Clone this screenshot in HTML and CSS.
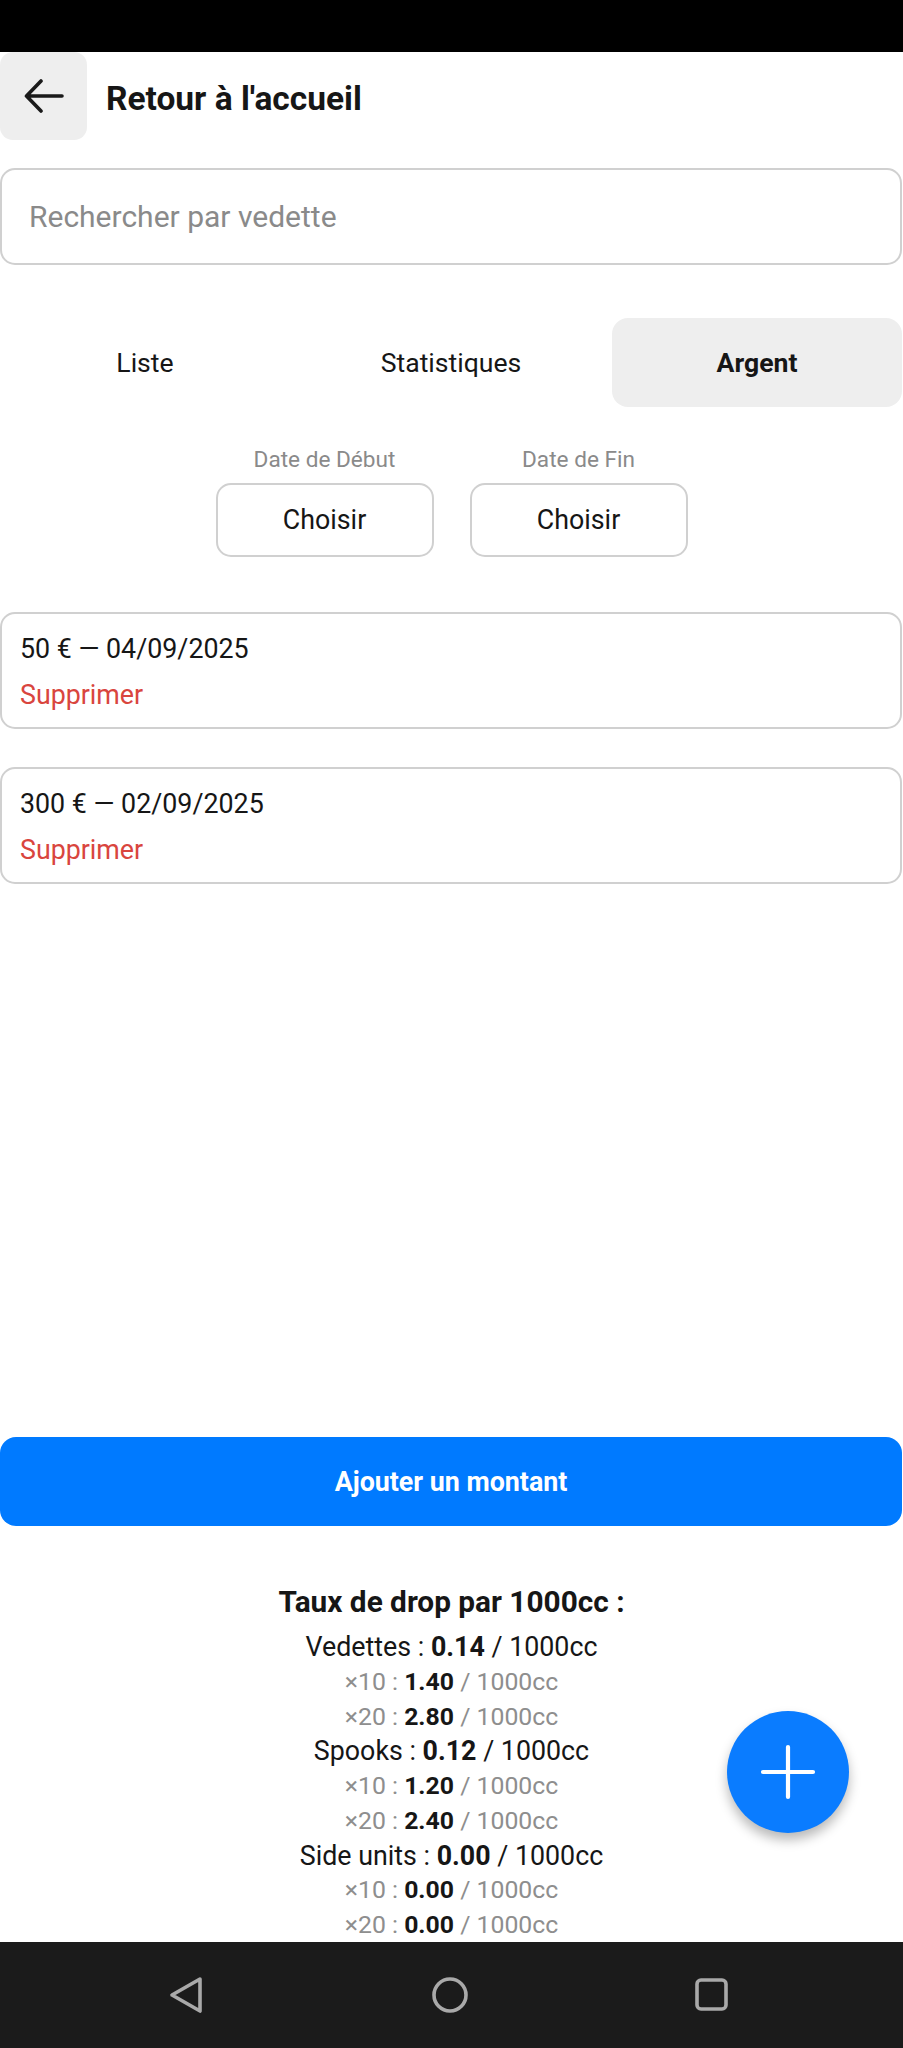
FILE: index.html
```html
<!DOCTYPE html>
<html lang="fr">
<head>
<meta charset="utf-8">
<title>Argent</title>
<link rel="stylesheet" href="styles.css">
</head>
<body>
<div class="statusbar"></div>
<main class="screen">
  <header class="topbar">
    <button class="back" aria-label="Retour">
      <svg width="40" height="36" viewBox="0 0 40 36"><path d="M38 18H3M17 3L2.5 18L17 33" fill="none" stroke="#1a1a1a" stroke-width="3.6" stroke-linecap="round" stroke-linejoin="round"/></svg>
    </button>
    <h1 class="title">Retour à l'accueil</h1>
  </header>

  <div class="search"><input class="search-input" type="text" placeholder="Rechercher par vedette"></div>

  <nav class="tabs">
    <div class="tab">Liste</div>
    <div class="tab">Statistiques</div>
    <div class="tab active">Argent</div>
  </nav>

  <section class="dates">
    <div class="date-field">
      <div class="date-label">Date de Début</div>
      <button class="date-btn">Choisir</button>
    </div>
    <div class="date-field">
      <div class="date-label">Date de Fin</div>
      <button class="date-btn">Choisir</button>
    </div>
  </section>

  <section class="entries">
    <div class="entry">
      <div class="entry-text">50 € — 04/09/2025</div>
      <div class="entry-delete">Supprimer</div>
    </div>
    <div class="entry">
      <div class="entry-text">300 € — 02/09/2025</div>
      <div class="entry-delete">Supprimer</div>
    </div>
  </section>

  <button class="add-btn">Ajouter un montant</button>

  <section class="stats">
    <h2 class="stats-title">Taux de drop par 1000cc :</h2>
    <div class="line main">Vedettes : <b>0.14</b> / 1000cc</div>
    <div class="line sub">×10 : <b>1.40</b> / 1000cc</div>
    <div class="line sub">×20 : <b>2.80</b> / 1000cc</div>
    <div class="line main">Spooks : <b>0.12</b> / 1000cc</div>
    <div class="line sub">×10 : <b>1.20</b> / 1000cc</div>
    <div class="line sub">×20 : <b>2.40</b> / 1000cc</div>
    <div class="line main">Side units : <b>0.00</b> / 1000cc</div>
    <div class="line sub">×10 : <b>0.00</b> / 1000cc</div>
    <div class="line sub">×20 : <b>0.00</b> / 1000cc</div>
  </section>
</main>

<button class="fab" aria-label="Ajouter">
  <svg width="56" height="56" viewBox="0 0 56 56"><path d="M28 3V53M3 28H53" stroke="#fff" stroke-width="4.2" stroke-linecap="round"/></svg>
</button>

<div class="navbar">
  <svg class="nav-icon" width="40" height="40" viewBox="0 0 40 40"><path d="M33 4L5 20L33 36Z" fill="none" stroke="#a9a9a9" stroke-width="3.6" stroke-linejoin="round"/></svg>
  <svg class="nav-icon" width="40" height="40" viewBox="0 0 40 40"><circle cx="20" cy="20" r="16" fill="none" stroke="#a9a9a9" stroke-width="3.6"/></svg>
  <svg class="nav-icon" width="40" height="40" viewBox="0 0 40 40"><rect x="5" y="5" width="29" height="29" rx="4" fill="none" stroke="#a9a9a9" stroke-width="3.6"/></svg>
</div>
</body>
</html>
```

FILE: styles.css
```css
* { box-sizing: border-box; }

html, body {
  margin: 0;
  padding: 0;
  width: 903px;
  height: 2048px;
  overflow: hidden;
  background: #ffffff;
  font-family: Roboto, "Noto Sans", "Liberation Sans", sans-serif;
  color: #161616;
}

.statusbar {
  height: 52px;
  background: #000;
}

.screen {
  display: flex;
  flex-direction: column;
}

.topbar {
  height: 88px;
  display: flex;
  align-items: center;
  gap: 19px;
}

.back {
  width: 87px;
  height: 88px;
  border: none;
  border-radius: 13px;
  background: #eeeeee;
  display: flex;
  align-items: center;
  justify-content: center;
  padding: 0;
}

.title {
  margin: 4px 0 0;
  font-size: 33.5px;
  font-weight: 700;
  color: #161616;
}

.search {
  margin-top: 28px;
  padding-right: 1px;
}

.search-input {
  width: 100%;
  height: 97px;
  border: 2px solid #d0d0d0;
  border-radius: 15px;
  padding: 0 0 0 27px;
  font-family: inherit;
  font-size: 30px;
  color: #161616;
  background: #fff;
  outline: none;
}

.search-input::placeholder { color: #8a8a8a; }

.tabs {
  margin-top: 53px;
  display: grid;
  grid-template-columns: repeat(3, 1fr);
  gap: 16px;
  padding-right: 1px;
}

.tab {
  height: 89px;
  display: flex;
  align-items: center;
  justify-content: center;
  font-size: 26.6px;
  color: #161616;
  border-radius: 16px;
}

.tab.active {
  background: #eeeeee;
  font-weight: 700;
}

.dates {
  margin-top: 41px;
  display: flex;
  justify-content: center;
  gap: 36px;
}

.date-field {
  display: flex;
  flex-direction: column;
  align-items: center;
  gap: 11px;
}

.date-label {
  font-size: 22.6px;
  line-height: 24px;
  color: #8a8a8a;
}

.date-btn {
  width: 218px;
  height: 74px;
  border: 2px solid #d0d0d0;
  border-radius: 15px;
  background: #fff;
  font-family: inherit;
  font-size: 26.8px;
  color: #161616;
}

.entries {
  margin-top: 55px;
  height: 825px;
  display: flex;
  flex-direction: column;
  gap: 38px;
  padding-right: 1px;
}

.entry {
  border: 2px solid #d0d0d0;
  border-radius: 15px;
  padding: 18px 18px 15px;
}

.entry-text {
  font-size: 26.8px;
  line-height: 34px;
  color: #161616;
}

.entry-delete {
  margin-top: 12px;
  font-size: 26.8px;
  line-height: 34px;
  color: #d9453e;
}

.add-btn {
  height: 89px;
  margin-right: 1px;
  border: none;
  border-radius: 16px;
  background: #007aff;
  color: #fff;
  font-family: inherit;
  font-size: 26.8px;
  font-weight: 700;
}

.stats {
  margin-top: 58px;
  text-align: center;
}

.stats-title {
  margin: 0 0 10px;
  font-size: 29.8px;
  line-height: 36px;
  font-weight: 700;
  color: #161616;
}

.line {
  line-height: 34.75px;
}

.line b { color: #161616; font-weight: 700; }

.line.main {
  font-size: 26.8px;
  color: #161616;
}

.line.sub {
  font-size: 24.8px;
  color: #8e8e8e;
}

.fab {
  position: fixed;
  right: 54px;
  top: 1711px;
  width: 122px;
  height: 122px;
  border: none;
  border-radius: 50%;
  background: #0a7cff;
  box-shadow: 0 7px 12px rgba(0, 0, 0, 0.28);
  display: flex;
  align-items: center;
  justify-content: center;
  padding: 0;
}

.navbar {
  position: fixed;
  left: 0;
  right: 0;
  bottom: 0;
  height: 106px;
  background: #1b1b1b;
  display: grid;
  grid-template-columns: 188px 262px 262px 1fr;
  align-items: center;
}

.navbar .nav-icon:nth-child(1) { grid-column: 1; justify-self: end; margin-right: -19px; }
.navbar .nav-icon:nth-child(2) { grid-column: 2; justify-self: end; margin-right: -20px; }
.navbar .nav-icon:nth-child(3) { grid-column: 3; justify-self: end; margin-right: -20px; }
```
